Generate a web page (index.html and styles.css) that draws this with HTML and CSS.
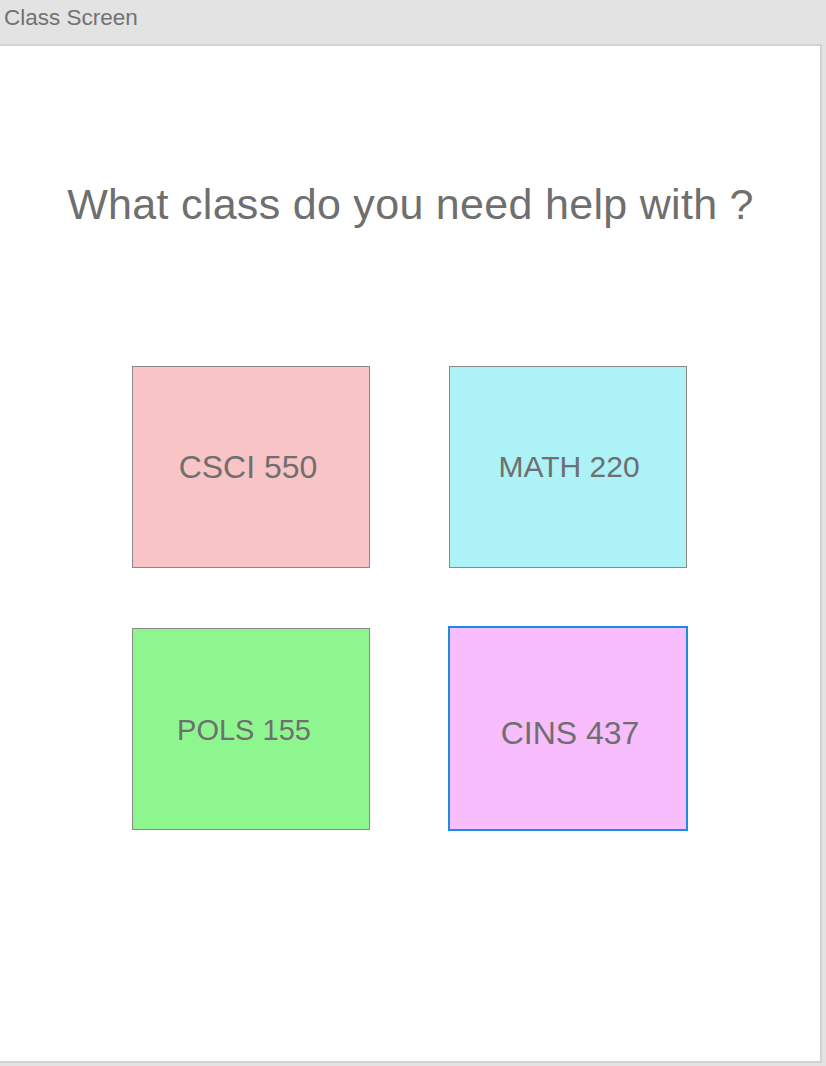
FILE: index.html
```html
<!DOCTYPE html>
<html>
<head>
<meta charset="utf-8">
<link rel="stylesheet" href="styles.css">
</head>
<body>
<div class="titlebar">Class Screen</div>
<div class="panel">
  <h1 class="heading">What class do you need help with ?</h1>
  <div class="grid">
    <div class="card pink"><span class="label big">CSCI 550</span></div>
    <div class="card cyan"><span class="label small">MATH 220</span></div>
    <div class="card green"><span class="label small">POLS 155</span></div>
    <div class="card magenta selected"><span class="label big low">CINS 437</span></div>
  </div>
</div>
</body>
</html>
```
FILE: styles.css
```css
html, body {
  margin: 0;
  padding: 0;
}
body {
  background: #e3e3e3;
  font-family: "Liberation Sans", Arial, sans-serif;
  color: #6f6f6f;
  width: 826px;
  height: 1066px;
  overflow: hidden;
}
.titlebar {
  height: 44px;
  box-sizing: border-box;
  padding: 4px 0 0 4px;
  font-size: 22.5px;
  line-height: 28px;
  color: #727272;
}
.panel {
  width: 820px;
  height: 878px;
  background: #ffffff;
  border-top: 2px solid #d2d2d2;
  border-right: 2px solid #d2d2d2;
  border-bottom: 2px solid #d2d2d2;
  padding-top: 137px;
  box-sizing: content-box;
  display: flex;
  flex-direction: column;
  align-items: center;
}
.heading {
  margin: 0;
  font-weight: normal;
  font-size: 43px;
  line-height: 43px;
  letter-spacing: 0.3px;
  color: #6f6f6f;
  text-align: center;
  margin-left: 1px;
}
.grid {
  margin-top: 140px;
  margin-right: 1px;
  display: grid;
  grid-template-columns: 238px 238px;
  grid-template-rows: 202px 202px;
  column-gap: 79px;
  row-gap: 60px;
}
.card {
  box-sizing: border-box;
  border: 1px solid #8a8a8a;
  display: flex;
  align-items: center;
  justify-content: center;
}
.pink { background: #f9c4c5; }
.cyan { background: #acf2f6; }
.green { background: #8ef68f; }
.magenta { background: #f7bdfd; }
.selected {
  border: 2px solid #1b8de4;
  margin: -2px -1px -1px -1px;
}
.label {
  color: #6f6f6f;
  line-height: 1;
}
.big { font-size: 32px; margin-right: 6px; }
.small { font-size: 30px; margin-right: 0; }
.green .label { margin-right: 14px; font-size: 29px; margin-top: 2px; }
.cyan .label { margin-left: 2px; }
.low { margin-top: 8px; margin-right: -2px; margin-left: 2px; }
```
